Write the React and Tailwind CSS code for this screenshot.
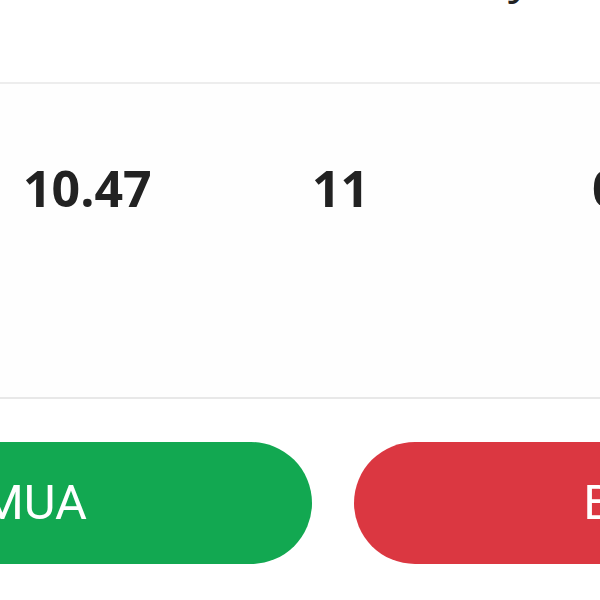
export default function App() {
  return (
    <div className="h-[600px] w-[600px] overflow-hidden bg-white" style={{ fontFamily: "'Open Sans', 'Noto Sans', sans-serif" }}>
      <div className="flex h-[82px] justify-start overflow-hidden">
        <span className="ml-[508px] mt-[-55px] text-[48px] leading-[60px] text-[#222]">y</span>
      </div>
      <div className="h-[2px] bg-[#ededed]" />
      <section className="flex h-[313px] items-start bg-[#fefefe] pt-[69px]">
        <div className="flex w-[900px] shrink-0 pl-[23px] text-[50px] font-bold leading-[70px] text-[#222]">
          <span className="w-[289px]">10.47</span>
          <span className="w-[280px]">11</span>
          <span>0</span>
        </div>
      </section>
      <div className="h-[2px] bg-[#e8e8e8]" />
      <div className="flex pt-[43px]">
        <div className="ml-[-244px] flex shrink-0 gap-[42px]" style={{ fontFamily: "Roboto, 'Noto Sans', sans-serif" }}>
          <button className="flex h-[122px] w-[556px] items-center justify-center rounded-full bg-[#12a851] text-[49px] text-white">MUA</button>
          <button className="flex h-[122px] w-[556px] items-center justify-center rounded-full bg-[#db3741] text-[49px] text-white">BÁN</button>
        </div>
      </div>
    </div>
  );
}
